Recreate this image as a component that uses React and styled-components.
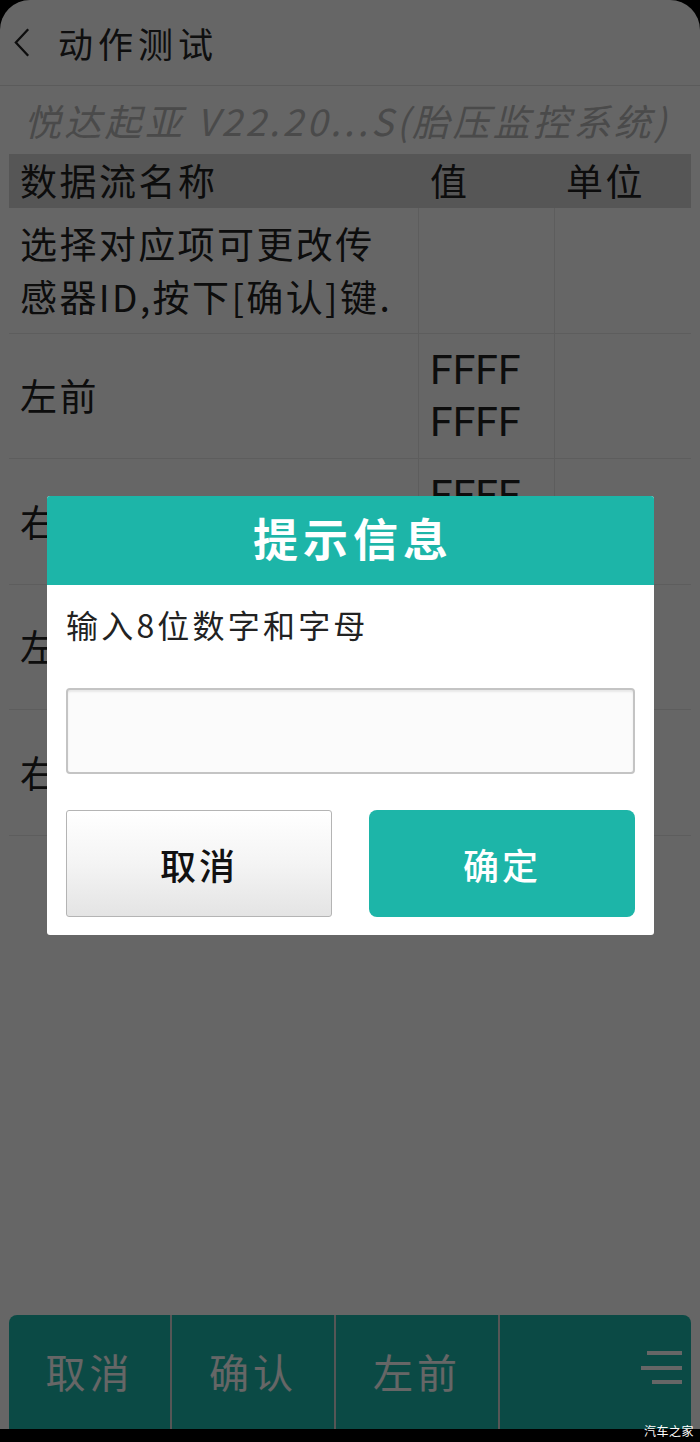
import React from 'react'
import styled, { createGlobalStyle } from 'styled-components'

const GlobalStyle = createGlobalStyle`
  html, body {
    margin: 0;
    padding: 0;
    background: #000;
  }
  body {
    font-family: "Noto Sans CJK SC", "Noto Sans", sans-serif;
  }
`

const rows = [
  { name: ['选择对应项可更改传', '感器ID,按下[确认]键.'], value: [] },
  { name: ['左前'], value: ['FFFF', 'FFFF'] },
  { name: ['右前'], value: ['FFFF', 'FFFF'] },
  { name: ['左后'], value: ['FFFF', 'FFFF'] },
  { name: ['右后'], value: ['FFFF', 'FFFF'] }
]

const tabs = ['取消', '确认', '左前']

class App extends React.Component {
  render() {
    return (
      <Screen>
        <GlobalStyle />
        <Phone>
          <TitleBar>
            <BackIcon viewBox="0 0 20 32">
              <path d="M16 2 L3 16 L16 30" fill="none" stroke="#222" strokeWidth="2.4" />
            </BackIcon>
            <Title>动作测试</Title>
          </TitleBar>
          <Subtitle>悦达起亚 V22.20...S(胎压监控系统)</Subtitle>
          <Table>
            <HeadRow>
              <HeadCell>数据流名称</HeadCell>
              <HeadCell>值</HeadCell>
              <HeadCell>单位</HeadCell>
            </HeadRow>
            {rows.map((r, i) => (
              <Row key={i}>
                <NameCell>
                  {r.name.map((l, j) => <Line key={j}>{l}</Line>)}
                </NameCell>
                <ValueCell>
                  {r.value.map((l, j) => <Line key={j}>{l}</Line>)}
                </ValueCell>
                <UnitCell />
              </Row>
            ))}
          </Table>
          <Spacer />
          <BottomBar>
            {tabs.map(t => <Tab key={t}>{t}</Tab>)}
            <MenuTab>
              <MenuIcon viewBox="0 0 42 34">
                <rect x="6" y="0" width="35" height="4" fill="#fff" />
                <rect x="0" y="15" width="41" height="4" fill="#fff" />
                <rect x="11" y="29" width="30" height="4" fill="#fff" />
              </MenuIcon>
            </MenuTab>
          </BottomBar>
        </Phone>
        <BlackBand />
        <Dim />
        <Dialog>
          <DialogHead>提示信息</DialogHead>
          <DialogBody>
            <Label>输入8位数字和字母</Label>
            <Input />
            <Buttons>
              <CancelButton>取消</CancelButton>
              <OkButton>确定</OkButton>
            </Buttons>
          </DialogBody>
        </Dialog>
        <Watermark>汽车之家</Watermark>
      </Screen>
    )
  }
}

const Screen = styled.div`
  position: relative;
  width: 700px;
  height: 1442px;
  background: #000;
  display: flex;
  flex-direction: column;
  overflow: hidden;
`

const Phone = styled.div`
  flex: 1;
  background: #fff;
  border-radius: 30px 30px 0 0;
  display: flex;
  flex-direction: column;
`

const BlackBand = styled.div`
  height: 13px;
  background: #000;
`

const TitleBar = styled.div`
  height: 85px;
  border-bottom: 1px solid #e4e4e4;
  display: flex;
  align-items: center;
  padding-left: 13px;
  gap: 26px;
`

const BackIcon = styled.svg`
  width: 19px;
  height: 31px;
`

const Title = styled.div`
  font-size: 35px;
  letter-spacing: 5px;
  color: #262626;
`

const Subtitle = styled.div`
  height: 67px;
  display: flex;
  align-items: center;
  padding-left: 24px;
  font-size: 37px;
  font-style: italic;
  letter-spacing: 3.3px;
  color: #b8b8b8;
  white-space: nowrap;
`

const Table = styled.div`
  margin: 1px 9px 0;
  display: flex;
  flex-direction: column;
`

const HeadRow = styled.div`
  height: 54px;
  background: #d8d8d8;
  display: grid;
  grid-template-columns: 410px 136px 136px;
  align-items: center;
`

const HeadCell = styled.div`
  padding-left: 11px;
  font-size: 37px;
  letter-spacing: 2.5px;
  color: #222;
  line-height: 1;
  margin-top: -2px;
`

const Row = styled.div`
  height: 125.5px;
  box-sizing: border-box;
  border-bottom: 1px solid #e8e8e8;
  display: grid;
  grid-template-columns: 410px 136px 136px;
`

const Cell = styled.div`
  display: flex;
  flex-direction: column;
  justify-content: center;
  color: #222;
`

const NameCell = styled(Cell)`
  padding-left: 11px;
  border-right: 1px solid #e8e8e8;
  font-size: 37px;
  letter-spacing: 2.4px;
  line-height: 53px;
`

const ValueCell = styled(Cell)`
  padding-left: 11px;
  border-right: 1px solid #e8e8e8;
  font-family: Roboto, "Liberation Sans", sans-serif;
  font-size: 41px;
  line-height: 52px;
`

const UnitCell = styled(Cell)``

const Line = styled.div`
  white-space: nowrap;
`

const Spacer = styled.div`
  flex: 1;
`

const BottomBar = styled.div`
  margin: 0 9px;
  height: 114px;
  background: #1db9ad;
  border-radius: 8px 8px 0 0;
  display: grid;
  grid-template-columns: 163px 164px 164px 1fr;
`

const Tab = styled.div`
  display: flex;
  align-items: center;
  justify-content: center;
  border-right: 2px solid #d8d8d8;
  color: #fff;
  font-size: 40px;
  letter-spacing: 4px;
  padding-bottom: 2px;
`

const MenuTab = styled.div`
  display: flex;
  align-items: center;
  justify-content: flex-end;
  padding-right: 8px;
  padding-bottom: 8px;
`

const MenuIcon = styled.svg`
  width: 42px;
  height: 34px;
`

const Dim = styled.div`
  position: absolute;
  inset: 0;
  background: rgba(0, 0, 0, 0.6);
`

const Dialog = styled.div`
  position: absolute;
  top: 496px;
  left: 47px;
  width: 607px;
  height: 439px;
  background: #fff;
  border-radius: 3px;
  overflow: hidden;
  display: flex;
  flex-direction: column;
`

const DialogHead = styled.div`
  height: 89px;
  background: #1db5a8;
  color: #fff;
  font-size: 45px;
  font-weight: 700;
  letter-spacing: 5px;
  display: flex;
  align-items: center;
  justify-content: center;
  padding: 0 0 6px 5px;
  box-sizing: border-box;
`

const DialogBody = styled.div`
  padding: 0 19px;
  display: flex;
  flex-direction: column;
`

const Label = styled.div`
  height: 82px;
  display: flex;
  align-items: center;
  font-size: 32px;
  letter-spacing: 3.2px;
  color: #222;
  padding-bottom: 4px;
  box-sizing: border-box;
`

const Input = styled.div`
  margin-top: 21px;
  height: 86px;
  box-sizing: border-box;
  border: 2px solid #c4c4c4;
  border-radius: 4px;
  background: #fbfbfb;
  box-shadow: inset 0 2px 2px rgba(0, 0, 0, 0.08);
`

const Buttons = styled.div`
  margin-top: 36px;
  display: grid;
  grid-template-columns: 266px 266px;
  justify-content: space-between;
`

const Button = styled.div`
  height: 107px;
  box-sizing: border-box;
  display: flex;
  align-items: center;
  justify-content: center;
  font-size: 36px;
  letter-spacing: 3px;
  font-weight: 500;
`

const CancelButton = styled(Button)`
  border: 1.5px solid #b4b4b4;
  border-radius: 3px;
  background: linear-gradient(#ffffff, #f4f4f4 50%, #e4e4e4);
  color: #111;
`

const OkButton = styled(Button)`
  border-radius: 8px;
  background: #1db5a8;
  color: #fff;
`

const Watermark = styled.div`
  position: absolute;
  right: 6px;
  bottom: 3px;
  color: #fff;
  font-size: 12px;
  letter-spacing: 0.5px;
`

export default App
